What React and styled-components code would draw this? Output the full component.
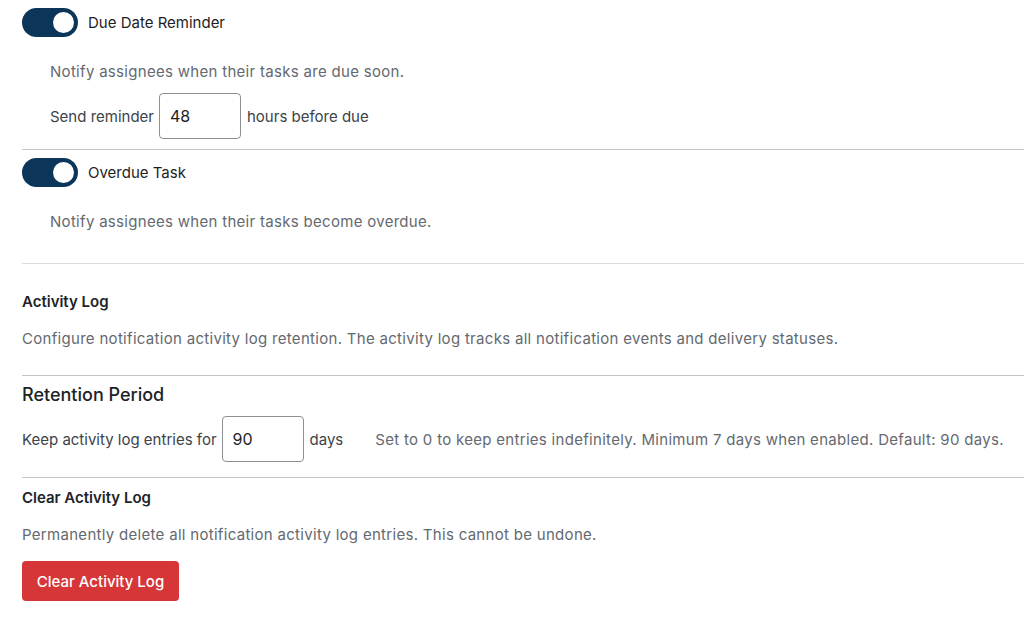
import React from "react"
import styled, { createGlobalStyle } from "styled-components"

const GlobalStyle = createGlobalStyle`
  body {
    margin: 0;
    background: #ffffff;
    font-family: Inter, "Noto Sans", "Liberation Sans", sans-serif;
    color: #1e1e1e;
  }
`

const Page = styled.div`
  padding: 8px 0 0 22px;
  width: 1002px;
`

const Section = styled.div`
  display: flex;
  flex-direction: column;
  align-items: flex-start;
`

const ToggleRow = styled.label`
  display: flex;
  align-items: center;
  gap: 10px;
  height: 29px;
  margin-top: ${(p) => p.$top || 0}px;
`

const Track = styled.span`
  position: relative;
  display: inline-block;
  width: 56px;
  height: 29px;
  border-radius: 15px;
  background: ${(p) => (p.$on ? "#0b3559" : "#c3c4c7")};
`

const Knob = styled.span`
  position: absolute;
  top: 4px;
  left: ${(p) => (p.$on ? "31px" : "4px")};
  width: 21px;
  height: 21px;
  border-radius: 50%;
  background: #ffffff;
`

const ToggleLabel = styled.span`
  font-size: 15px;
  color: #1e1e1e;
`

const Description = styled.p`
  margin: ${(p) => p.$top || 0}px 0 0 ${(p) => p.$indent || 0}px;
  font-size: 15px;
  line-height: 22px;
  letter-spacing: 0.3px;
  color: #646970;
`

const FieldRow = styled.div`
  display: flex;
  align-items: center;
  margin: ${(p) => p.$top || 0}px 0 0 ${(p) => p.$indent || 0}px;
  font-size: 15px;
  color: #3c434a;
`

const NumberInput = styled.input`
  box-sizing: border-box;
  width: 82px;
  height: 46px;
  margin: 0 6px 0 5px;
  padding: 0 10px;
  border: 1px solid #8c8f94;
  border-radius: 4px;
  font-family: inherit;
  font-size: 16px;
  color: #1e1e1e;
  background: #fff;
  outline: none;
`

const Help = styled.span`
  margin-left: 32px;
  letter-spacing: 0.3px;
  color: #646970;
`

const Divider = styled.hr`
  align-self: stretch;
  margin: ${(p) => p.$top || 0}px 0 0 0;
  border: 0;
  border-top: 1px solid ${(p) => (p.$light ? "#dcdcde" : "#c3c4c7")};
  height: 0;
`

const SubHeading = styled.h3`
  margin: ${(p) => p.$top || 0}px 0 0;
  font-size: 15px;
  line-height: 20px;
  font-weight: 600;
  color: #1d2327;
`

const Title = styled.h2`
  margin: ${(p) => p.$top || 0}px 0 0;
  font-size: 18px;
  line-height: 24px;
  font-weight: 500;
  color: #1d2327;
`

const DangerButton = styled.button`
  margin-top: 15px;
  width: 157px;
  height: 40px;
  border: 0;
  border-radius: 4px;
  background: #d63638;
  color: #ffffff;
  font-family: inherit;
  font-size: 15px;
  font-weight: 500;
  cursor: pointer;
`

const Toggle = ({ label, on, top }) => (
  <ToggleRow $top={top}>
    <Track $on={on}>
      <Knob $on={on} />
    </Track>
    <ToggleLabel>{label}</ToggleLabel>
  </ToggleRow>
)

export default function App() {
  return (
    <Page>
      <GlobalStyle />
      <Section>
        <Toggle label="Due Date Reminder" on />
        <Description $top={24} $indent={28}>
          Notify assignees when their tasks are due soon.
        </Description>
        <FieldRow $top={10} $indent={28}>
          Send reminder
          <NumberInput type="text" defaultValue="48" />
          hours before due
        </FieldRow>
        <Divider $top={10} />

        <Toggle label="Overdue Task" on top={8} />
        <Description $top={24} $indent={28}>
          Notify assignees when their tasks become overdue.
        </Description>
        <Divider $top={30} $light />

        <SubHeading $top={28}>Activity Log</SubHeading>
        <Description $top={16}>
          Configure notification activity log retention. The activity log tracks all notification
          events and delivery statuses.
        </Description>
        <Divider $top={25} />

        <Title $top={7}>Retention Period</Title>
        <FieldRow $top={9}>
          Keep activity log entries for
          <NumberInput type="text" defaultValue="90" />
          days
          <Help>
            Set to 0 to keep entries indefinitely. Minimum 7 days when enabled. Default: 90 days.
          </Help>
        </FieldRow>
        <Divider $top={15} />

        <SubHeading $top={10}>Clear Activity Log</SubHeading>
        <Description $top={16}>
          Permanently delete all notification activity log entries. This cannot be undone.
        </Description>
        <DangerButton>Clear Activity Log</DangerButton>
      </Section>
    </Page>
  )
}
